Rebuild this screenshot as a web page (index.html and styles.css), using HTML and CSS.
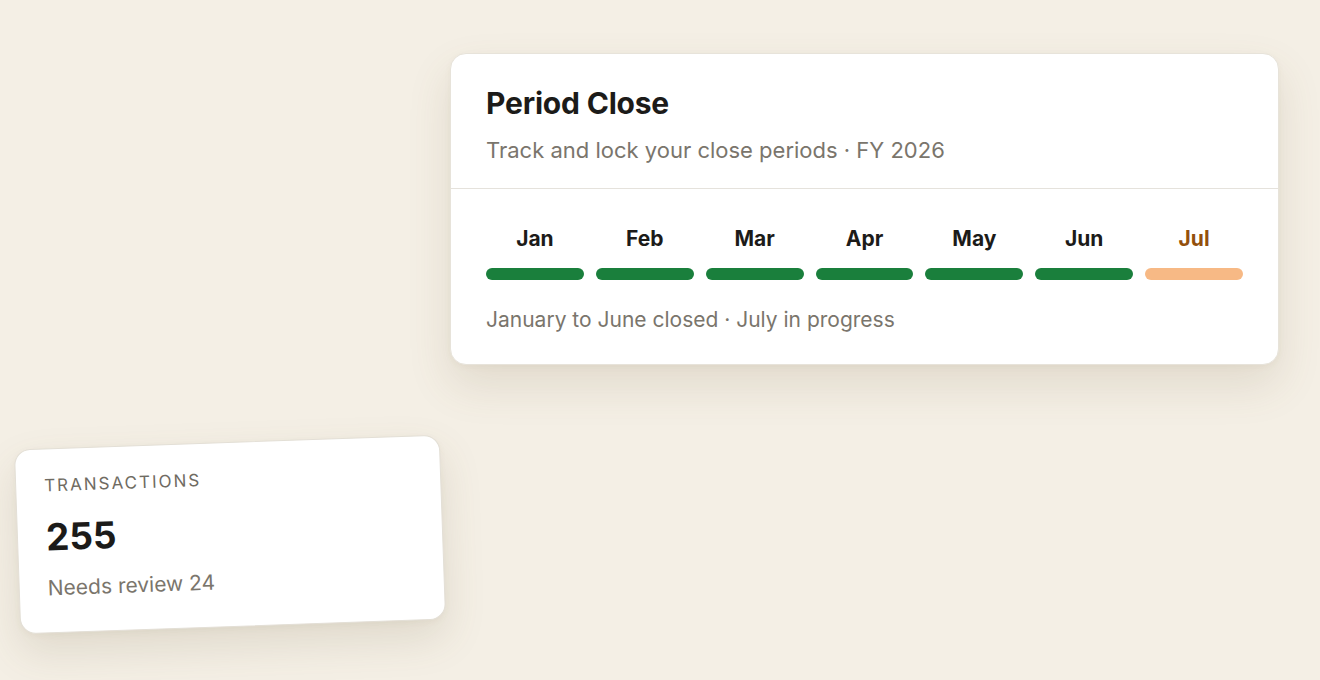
FILE: index.html
```html
<!DOCTYPE html>
<html lang="en">
<head>
<meta charset="utf-8">
<title>Period Close</title>
<link rel="stylesheet" href="styles.css">
</head>
<body>
<div class="page">
  <section class="close-card">
    <header class="close-head">
      <h1 class="close-title">Period Close</h1>
      <p class="close-sub">Track and lock your close periods · FY 2026</p>
    </header>
    <div class="close-body">
      <div class="months">
        <div class="month"><span class="month-label">Jan</span><span class="bar bar-done"></span></div>
        <div class="month"><span class="month-label">Feb</span><span class="bar bar-done"></span></div>
        <div class="month"><span class="month-label">Mar</span><span class="bar bar-done"></span></div>
        <div class="month"><span class="month-label">Apr</span><span class="bar bar-done"></span></div>
        <div class="month"><span class="month-label">May</span><span class="bar bar-done"></span></div>
        <div class="month"><span class="month-label">Jun</span><span class="bar bar-done"></span></div>
        <div class="month month-current"><span class="month-label">Jul</span><span class="bar bar-progress"></span></div>
      </div>
      <p class="close-note">January to June closed · July in progress</p>
    </div>
  </section>
  <section class="tx-card">
    <div class="tx-label">TRANSACTIONS</div>
    <div class="tx-value">255</div>
    <div class="tx-sub">Needs review 24</div>
  </section>
</div>
</body>
</html>
```

FILE: styles.css
```css
* { box-sizing: border-box; }
html, body {
  margin: 0;
  padding: 0;
  background: #f4efe5;
  font-family: Inter, "Noto Sans", "Liberation Sans", sans-serif;
  height: 680px;
  overflow: hidden;
}
.page {
  display: flex;
  flex-direction: column;
  align-items: flex-start;
  padding-top: 53px;
}
.close-card {
  margin-left: 450px;
  width: 829px;
  height: 312px;
  background: #ffffff;
  border: 1px solid #e7e3da;
  border-radius: 16px;
  box-shadow: 0 20px 44px rgba(110, 95, 60, 0.14), 0 2px 6px rgba(110, 95, 60, 0.05);
}
.close-head {
  padding: 31px 35px 0 35px;
  height: 135px;
  border-bottom: 1px solid #e5e2dc;
}
.close-title {
  margin: 0;
  font-size: 30px;
  line-height: 36px;
  font-weight: 700;
  color: #1c1b19;
  letter-spacing: -0.2px;
}
.close-sub {
  margin: 14px 0 0 0;
  font-size: 22px;
  line-height: 30px;
  color: #7a756c;
}
.close-body {
  padding: 36px 35px 0 35px;
}
.months {
  display: flex;
  gap: 12px;
}
.month {
  flex: 1;
  display: flex;
  flex-direction: column;
  align-items: center;
  gap: 15px;
}
.month-label {
  font-size: 21px;
  line-height: 28px;
  font-weight: 700;
  color: #1c1b19;
}
.month-current .month-label { color: #93500c; }
.bar {
  display: block;
  width: 100%;
  height: 12px;
  border-radius: 6px;
}
.bar-done { background: #1a7f3c; }
.bar-progress { background: #f7b985; }
.close-note {
  margin: 26px 0 0 0;
  font-size: 21px;
  line-height: 28px;
  color: #7a756c;
}
.tx-card {
  margin-top: 77px;
  margin-left: 17px;
  width: 426px;
  height: 185px;
  padding: 26px 28px 24px 28px;
  background: #ffffff;
  border: 1px solid #e3dfd6;
  border-radius: 16px;
  transform: rotate(-2deg);
  box-shadow: 0 18px 40px rgba(110, 95, 60, 0.15), 0 2px 6px rgba(110, 95, 60, 0.05);
}
.tx-label {
  font-size: 17px;
  line-height: 20px;
  letter-spacing: 2px;
  color: #6f6b62;
}
.tx-value {
  margin-top: 20px;
  font-size: 37px;
  line-height: 44px;
  font-weight: 700;
  color: #1c1b19;
}
.tx-sub {
  margin-top: 15px;
  font-size: 21px;
  line-height: 28px;
  color: #7a756c;
}
```
